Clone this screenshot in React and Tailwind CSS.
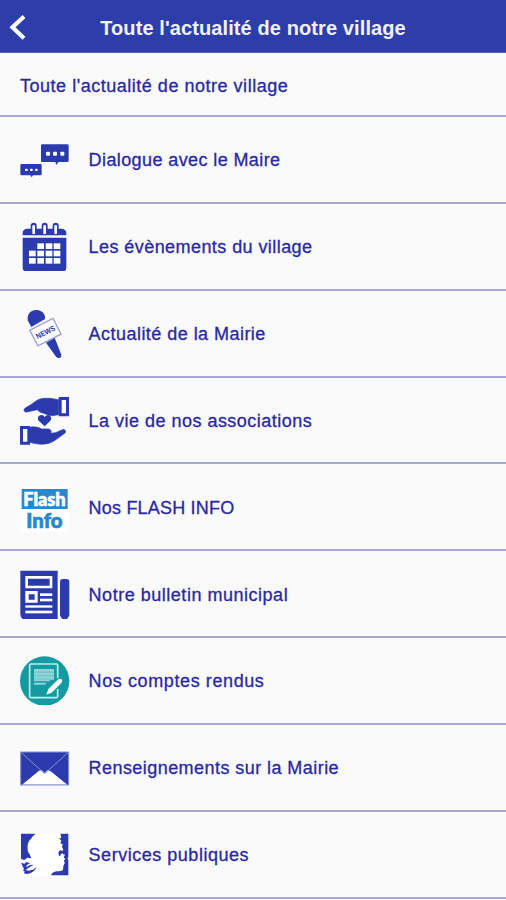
import React from "react";

const BLUE = "#2b3bad";

const DialogueIcon = () => (
  <svg viewBox="60 42 150 150" className="h-[50px] w-[50px]" fill={BLUE}>
    <path d="M127 73h75q4 0 4 4v45q0 4-4 4h-27l-6 9-3-9h-39q-4 0-4-4V77q0-4 4-4z" />
    <path d="M65 132h56q4 0 4 4v26q0 4-4 4H99l-4 6-4-6H65q-4 0-4-4v-26q0-4 4-4z" />
    <g fill="#fff">
      <rect x="138" y="95" width="12" height="12" rx="3" />
      <rect x="159" y="95" width="12" height="12" rx="3" />
      <rect x="181" y="95" width="12" height="12" rx="3" />
      <rect x="75" y="146" width="8" height="7" rx="2" />
      <rect x="90" y="146" width="8" height="7" rx="2" />
      <rect x="105" y="146" width="8" height="7" rx="2" />
    </g>
  </svg>
);

const CalendarIcon = () => (
  <svg viewBox="60 39 150 150" className="h-[50px] w-[50px]" fill={BLUE}>
    <path d="M68 82V75q0-11 12-13h106q13 2 13 13v7z" />
    <path d="M68 89h131v90q0 11-11 11H79q-11 0-11-11z" />
    {/* binding rings */}
    {[101, 134, 167].map((x) => (
      <g key={x}>
        <rect x={x - 9} y="44" width="18" height="38" rx="9" />
        <rect x={x - 4} y="51" width="8" height="28" rx="4" fill="#fff" />
      </g>
    ))}
    {/* day cells */}
    <g fill="#fff">
      <rect x="112" y="106" width="20" height="17" />
      <rect x="137" y="106" width="20" height="17" />
      <rect x="161" y="106" width="20" height="17" />
      <rect x="87" y="128" width="20" height="17" />
      <rect x="112" y="128" width="20" height="17" />
      <rect x="137" y="128" width="20" height="17" />
      <rect x="161" y="128" width="20" height="17" />
      <rect x="87" y="150" width="20" height="17" />
      <rect x="112" y="150" width="20" height="17" />
      <rect x="137" y="150" width="20" height="17" />
      <rect x="161" y="150" width="20" height="17" />
    </g>
  </svg>
);

const MicIcon = () => (
  <svg viewBox="60 39 150 150" className="h-[50px] w-[50px]" fill={BLUE}>
    <path d="M83 76C81 54 95 44 110 45c17 1 27 13 25 27L94 96z" />
    <path d="M138 143l26-15 20 51q1 10-9 10-5 0-8-5z" />
    <g transform="rotate(-27 136 111)">
      <rect x="97" y="85" width="78" height="53" fill="#fff" stroke="#9a9ed0" strokeWidth="4" />
      <text
        x="136"
        y="120"
        textAnchor="middle"
        fontSize="23"
        fontWeight="bold"
        textLength="62"
        lengthAdjust="spacingAndGlyphs"
        fontFamily="'Liberation Sans', sans-serif"
      >
        NEWS
      </text>
    </g>
  </svg>
);

const HandsIcon = () => (
  <svg viewBox="60 39 150 150" className="h-[50px] w-[50px]" fill={BLUE}>
    <path d="M176 45h31v58h-31zM185 54v40h13V54z" fillRule="evenodd" />
    <path
      d="M176 53C158 50 145 47 124 50c-11 2-19 9-28 16l-20 12c-7 5-4 13 5 12l31-7 7 7c14 4 25 10 38 11l19-3z"
      stroke={BLUE}
      strokeWidth="2"
    />
    <path d="M60 132h30v56H60zM69 141v38h13v-38z" fillRule="evenodd" />
    <path
      d="M90 136c12-3 24-1 35 5h21c8 2 10 9 5 13l16-2 20-9c8-2 13 5 7 11l-31 22c-18 13-48 13-73 5z"
      stroke={BLUE}
      strokeWidth="2"
    />
    <path d="M134 133l-18-17c-6-9 1-18 10-17q6 1 8 6 3-5 9-6c8-1 15 9 8 17z" />
  </svg>
);

const FlashIcon = () => (
  <svg
    viewBox="60 41 150 150"
    className="h-[50px] w-[50px]"
    fontFamily="Lato, 'Open Sans', sans-serif"
    fontWeight="900"
  >
    <rect x="62" y="55" width="145" height="139" fill="#fff" />
    <rect x="65" y="62" width="138" height="60" fill="#2788ce" />
    <text x="70" y="112" fontSize="55" textLength="127" lengthAdjust="spacingAndGlyphs" fill="#fff" stroke="#fff" strokeWidth="2">
      Flash
    </text>
    <text x="79" y="180" fontSize="60" textLength="109" lengthAdjust="spacingAndGlyphs" fill="#2788ce" stroke="#2788ce" strokeWidth="2">
      Info
    </text>
  </svg>
);

const NewspaperIcon = () => (
  <svg viewBox="60 40 150 150" className="h-[50px] w-[50px]" fill={BLUE}>
    <path d="M61 45h112v148H76q-15-3-15-18z" />
    <path d="M180 78q0-8 9-8h10q9 0 9 8v102l-9 13h-10l-9-13z" />
    <g fill="#fff">
      <path d="M76 61h81v37H76zM84 69v21h65V69z" fillRule="evenodd" />
      <path d="M76 106h37v35H76zM86 116v16h18v-16z" fillRule="evenodd" />
      <rect x="120" y="113" width="37" height="8" />
      <rect x="120" y="129" width="37" height="8" />
      <rect x="76" y="149" width="81" height="7" />
      <rect x="76" y="165" width="81" height="8" />
    </g>
  </svg>
);

const ReportIcon = () => (
  <svg viewBox="60 46 150 150" className="h-[50px] w-[50px]">
    <circle cx="134" cy="124" r="74" fill="#139aa3" />
    <path
      d="M173 116V77q0-4-4-4H93q-4 0-4 4v93q0 4 4 4h76q4 0 4-4v-22"
      fill="none"
      stroke="#b9f0ee"
      strokeWidth="5"
    />
    <path d="M102 88h60v32h-10l-4 5h-46zM102 129h38l-5 6h-33z" fill="#8fd3d5" />
    <path d="M102 97.500h60M102 108h60M102 118h50" stroke="#5fbcc0" strokeWidth="2" />
    <path d="M139 165l6-17 30-29q8-5 11 2 2 5-2 9l-29 29z" fill="#f5ffff" />
  </svg>
);

const EnvelopeIcon = () => (
  <svg viewBox="60 43 150 150" className="h-[50px] w-[50px]">
    <rect x="62" y="73" width="144" height="99" fill={BLUE} />
    <path d="M66 171l51-42 9-1 8 8 9-9 9 4 50 40z" fill="#fff" />
    <path d="M64 75l70 63 70-63" fill="none" stroke="#8990d0" strokeWidth="3" />
    <rect x="62" y="73" width="144" height="99" fill="none" stroke="#8990d0" strokeWidth="3" />
  </svg>
);

const PublicServiceIcon = () => (
  <svg viewBox="60 43 150 150" className="h-[50px] w-[50px]">
    <rect x="63" y="56" width="142" height="126" fill="#fff" />
    <g fill={BLUE}>
      <path d="M63 57h44c-9 7-14 16-20 22-5 9-4 16-4 22-1 8 2 13 6 18l5 12-12-2-9 7-10-3z" />
      <path d="M63 144l11 3 5-5 11 4-9 5-3 7 12-7 11-1-12 7-12 9 8 2 14-3 11-8-7 11-12 8-11 2-9-2 4-5-6-3 3-5-4-8z" />
      <path d="M181 57h24v70l-3 5 3 3v47h-52c2-7 9-11 17-12 9-1 17-1 19-5l1-11 4-8-2-9 4-4-5-5 4-8-6-2-2-8 3-6-4-6 2-9-7-3 3-9-7-5 7-3z" />
      <path d="M175 113l5-6 8 2 3 5-8 4-3 7-3-1z" />
    </g>
  </svg>
);

const items = [
  { label: "Dialogue avec le Maire", Icon: DialogueIcon, tracking: "tracking-[0.4px]" },
  { label: "Les évènements du village", Icon: CalendarIcon, tracking: "tracking-[0.43px]" },
  { label: "Actualité de la Mairie", Icon: MicIcon, tracking: "tracking-[0.46px]" },
  { label: "La vie de nos associations", Icon: HandsIcon, tracking: "tracking-[0.48px]" },
  { label: "Nos FLASH INFO", Icon: FlashIcon, tracking: "tracking-[0.2px]" },
  { label: "Notre bulletin municipal", Icon: NewspaperIcon, tracking: "tracking-[0.52px]" },
  { label: "Nos comptes rendus", Icon: ReportIcon, tracking: "tracking-[0.6px]" },
  { label: "Renseignements sur la Mairie", Icon: EnvelopeIcon, tracking: "tracking-[0.44px]" },
  { label: "Services publiques", Icon: PublicServiceIcon, tracking: "tracking-[0.52px]" },
];

const App = () => {
  return (
    <div className="h-[900px] w-full overflow-hidden bg-[#fafafb] font-['Liberation_Sans',Arial,sans-serif] text-[#2828a2]">
      {/* Top bar */}
      <header className="grid h-[53px] grid-cols-[40px_1fr_40px] items-center border-b border-[#5660b8] bg-[#2d3daa] text-white">
        <svg viewBox="0 0 40 52" className="h-[52px] w-10" fill="none" stroke="#fff" strokeWidth="4.2">
          <path d="M24 16.500L12.500 27.300 24 38.200" />
        </svg>
        <h1 className="pt-[3px] text-center text-[20px] leading-6 font-bold tracking-[0.1px] whitespace-nowrap text-[#f1f2ff]">
          Toute l'actualité de notre village
        </h1>
      </header>

      <div className="flex h-16 items-center border-b-2 border-[#a9a8d4] px-5 pt-1">
        <p className="text-[18px] tracking-[0.52px] [-webkit-text-stroke:0.3px]">
          Toute l'actualité de notre village
        </p>
      </div>

      {/* Sections */}
      <ul>
        {items.map(({ label, Icon, tracking }) => (
          <li key={label} className="flex h-[86.85px] items-center gap-[18.6px] border-b-2 border-[#a9a8d4] px-5">
            <Icon />
            <span className={`pt-[3px] text-[18px] [-webkit-text-stroke:0.3px] ${tracking}`}>{label}</span>
          </li>
        ))}
      </ul>
    </div>
  );
};

export default App;
